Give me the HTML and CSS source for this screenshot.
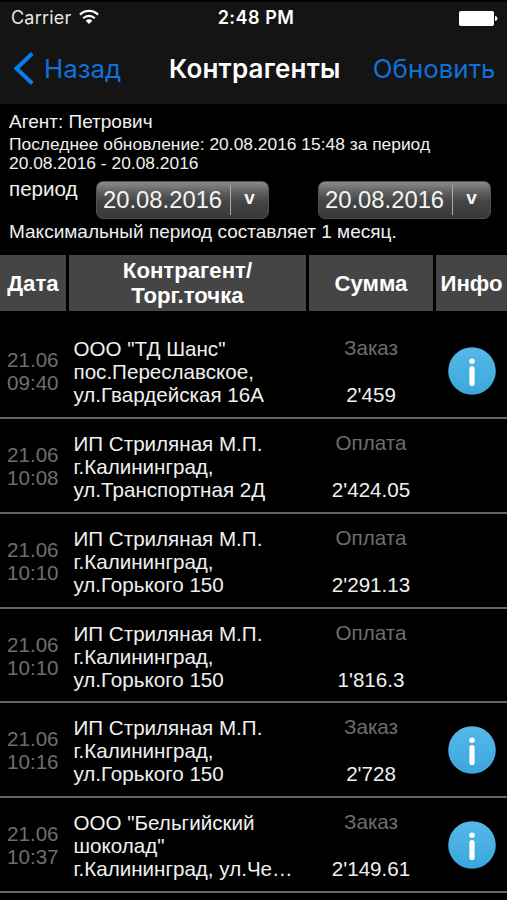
FILE: index.html
```html
<!DOCTYPE html>
<html lang="ru">
<head>
<meta charset="utf-8">
<title>Контрагенты</title>
<link rel="stylesheet" href="styles.css">
</head>
<body>
<header class="top">
  <div class="status">
    <div class="carrier"><span>Carrier</span>
      <svg class="wifi" width="20" height="16" viewBox="0 0 20 16"><g fill="none" stroke="#fff" stroke-width="2.2"><path d="M1 5.6a12.7 12.7 0 0 1 18 0"/><path d="M4.2 9.2a8.2 8.2 0 0 1 11.6 0"/></g><path fill="#fff" d="M6.7 11.7a4.7 4.7 0 0 1 6.6 0L10 15z"/></svg>
    </div>
    <div class="time">2:48 PM</div>
    <div class="battery"><svg width="39" height="15" viewBox="0 0 39 15"><rect width="35" height="15" rx="1.8" fill="#fff"/><path d="M36 5q2.5 .4 2.5 2.5T36 10z" fill="#fff"/></svg></div>
  </div>
  <nav class="nav">
    <a class="back"><svg width="20" height="33" viewBox="0 0 20 33"><path d="M18.3 1.5L2.5 16.5l15.8 15" fill="none" stroke="#087df2" stroke-width="4"/></svg><span>Назад</span></a>
    <h1>Контрагенты</h1>
    <a class="refresh">Обновить</a>
  </nav>
</header>
<section class="summary">
  <p class="agent">Агент: Петрович</p>
  <p class="updated">Последнее обновление: 20.08.2016 15:48 за период<br>20.08.2016 - 20.08.2016</p>
  <div class="period">
    <span class="label">период</span>
    <button class="date"><span>20.08.2016</span><i></i><b>v</b></button>
    <button class="date second"><span>20.08.2016</span><i></i><b>v</b></button>
  </div>
  <p class="limit">Максимальный период составляет 1 месяц.</p>
</section>
<main>
  <div class="head grid"><div>Дата</div><div>Контрагент/<br>Торг.точка</div><div>Сумма</div><div>Инфо</div></div>
  <div class="row grid"><div class="when">21.06<br>09:40</div><div class="who">ООО "ТД Шанс"<br>пос.Переславское,<br>ул.Гвардейская 16А</div><div class="sum"><span>Заказ</span><b>2'459</b></div><div class="info"><svg viewBox="0 0 48 48"><use href="#info"/></svg></div></div>
  <div class="row grid"><div class="when">21.06<br>10:08</div><div class="who">ИП Стриляная М.П.<br>г.Калининград,<br>ул.Транспортная 2Д</div><div class="sum"><span>Оплата</span><b>2'424.05</b></div></div>
  <div class="row grid"><div class="when">21.06<br>10:10</div><div class="who">ИП Стриляная М.П.<br>г.Калининград,<br>ул.Горького 150</div><div class="sum"><span>Оплата</span><b>2'291.13</b></div></div>
  <div class="row grid"><div class="when">21.06<br>10:10</div><div class="who">ИП Стриляная М.П.<br>г.Калининград,<br>ул.Горького 150</div><div class="sum"><span>Оплата</span><b>1'816.3</b></div></div>
  <div class="row grid"><div class="when">21.06<br>10:16</div><div class="who">ИП Стриляная М.П.<br>г.Калининград,<br>ул.Горького 150</div><div class="sum"><span>Заказ</span><b>2'728</b></div><div class="info"><svg viewBox="0 0 48 48"><use href="#info"/></svg></div></div>
  <div class="row grid"><div class="when">21.06<br>10:37</div><div class="who">ООО "Бельгийский<br>шоколад"<br>г.Калининград, ул.Че…</div><div class="sum"><span>Заказ</span><b>2'149.61</b></div><div class="info"><svg viewBox="0 0 48 48"><use href="#info"/></svg></div></div>
</main>
<svg class="defs" width="0" height="0"><defs>
  <linearGradient id="blue" x1="0" y1="0" x2="0" y2="1"><stop offset="0" stop-color="#55b9e8"/><stop offset="1" stop-color="#3ba6dd"/></linearGradient>
  <g id="info"><circle cx="24" cy="24" r="23.8" fill="url(#blue)"/><circle cx="24" cy="14.3" r="2.7" fill="#fff"/><rect x="21.4" y="19" width="5.2" height="20" rx="2.6" fill="#fff"/></g>
</defs></svg>
</body>
</html>
```
FILE: styles.css
```css
* { box-sizing: border-box; }
body {
  margin: 0;
  height: 900px;
  overflow: hidden;
  background: #000;
  color: #f0f0f0;
  font-family: "Liberation Sans", Arial, sans-serif;
}
p, h1 { margin: 0; }
.top {
  height: 104px;
  border-top: 2px solid #000;
  background: #141414;
  font-family: Inter, sans-serif;
}
.status {
  height: 32px;
  display: grid;
  grid-template-columns: 1fr auto 1fr;
  align-items: center;
  padding: 0 9px 0 11px;
  color: #fff;
  font-size: 18px;
  line-height: 32px;
}
.carrier { display: flex; align-items: center; gap: 8px; color: #e6e6e6; letter-spacing: .2px; }
.carrier .wifi { margin-top: -2px; }
.time { padding-left: 3px; font-weight: 600; letter-spacing: .5px; }
.battery { display: flex; justify-content: flex-end; }
.nav {
  height: 70px;
  display: grid;
  grid-template-columns: 155px 1fr 155px;
  align-items: center;
  justify-items: center;
  padding: 0 13px 2px 14px;
  color: #0f72d8;
  font-size: 25.9px;
}
.back { display: flex; align-items: center; gap: 10px; justify-self: start; }
.nav h1 { color: #fff; font-size: 26px; font-weight: 600; letter-spacing: .2px; white-space: nowrap; }
.refresh { justify-self: end; }
.summary { height: 151px; padding: 6px 9px 0; white-space: nowrap; }
.agent { font-size: 19px; line-height: 24px; }
.updated { margin-top: 1px; font-size: 17.4px; line-height: 19px; }
.period { display: flex; height: 38px; margin-top: 8px; font-size: 20.6px; }
.label { width: 87px; margin-top: -3px; line-height: 22px; }
.date {
  display: flex;
  align-items: center;
  width: 173px;
  height: 38px;
  padding: 0 0 0 6px;
  border: 1px solid #505050;
  border-radius: 7px;
  background: linear-gradient(#8c8c8c, #606060 28%, #444 55%, #383838);
  color: #f4f4f4;
  font: 23.8px "Liberation Sans", Arial, sans-serif;
}
.date i { width: 1px; height: 30px; margin-left: 8px; background: #aaa; }
.date b { flex: 1; margin-top: -5px; font-size: 19px; text-align: center; }
.second { margin-left: 49px; }
.limit { margin-top: 1px; font-size: 19px; line-height: 24px; }
.grid { display: grid; grid-template-columns: 66px 237px 124px 71px; column-gap: 3px; }
.head { height: 56px; color: #fff; font-size: 22.2px; font-weight: 700; line-height: 25px; text-align: center; }
.head > div { display: flex; align-items: center; justify-content: center; background: #454545; }
.row { height: 94.8px; border-bottom: 2px solid #666; font-size: 20.6px; line-height: 23px; }
.head + .row { height: 108px; padding-top: 13px; }
.when { padding: 24px 0 0 7px; color: #6e6e6e; }
.who { padding: 13px 0 0 4.5px; white-space: nowrap; }
.sum { display: flex; flex-direction: column; align-items: center; padding-top: 12px; }
.sum span { color: #6e6e6e; }
.sum b { margin-top: 24px; font-weight: 400; }
.info { padding: 23px 0 0 12px; }
.info svg { display: block; width: 48px; height: 48px; }
.defs { position: absolute; }
```
